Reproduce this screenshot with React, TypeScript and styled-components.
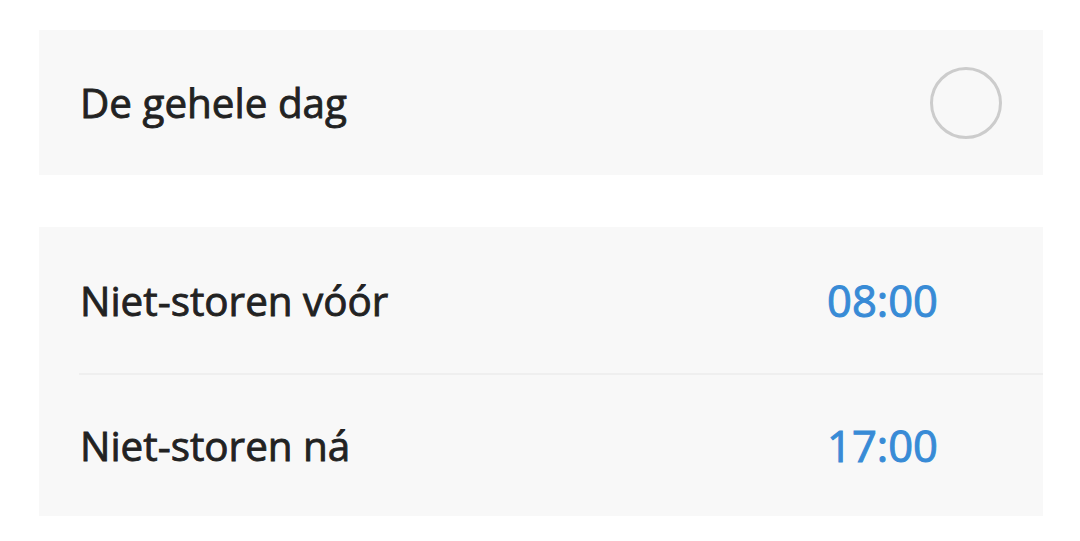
import styled, { createGlobalStyle } from 'styled-components';

const GlobalStyle = createGlobalStyle`
  body {
    margin: 0;
    background: #ffffff;
    font-family: 'Open Sans', 'Noto Sans', sans-serif;
  }
`;

const Page = styled.div`
  display: flex;
  flex-direction: column;
  gap: 52px;
  padding: 30px 37px 0 39px;
`;

const Group = styled.section`
  display: flex;
  flex-direction: column;
  background: #f8f8f8;
`;

const Row = styled.div<{ $height: number }>`
  display: flex;
  align-items: center;
  justify-content: space-between;
  height: ${(p) => p.$height}px;
  padding: 0 41px 0 41px;
`;

/* medium weight: regular cut with a thin stroke */
const Label = styled.span`
  font-size: 40.4px;
  font-weight: 400;
  color: #222222;
  -webkit-text-stroke: 0.85px currentColor;
`;

const Time = styled.span`
  font-size: 43.5px;
  font-weight: 400;
  color: #388bd6;
  margin-right: 64px;
  -webkit-text-stroke: 1px currentColor;
`;

const Radio = styled.span`
  width: 66px;
  height: 66px;
  border-radius: 50%;
  border: 3px solid #cccccc;
  box-sizing: content-box;
`;

const Divider = styled.div`
  height: 2px;
  margin-left: 40px;
  background: #efefef;
`;

export default function App() {
  return (
    <>
      <GlobalStyle />
      <Page>
        <Group>
          <Row $height={145}>
            <Label>De gehele dag</Label>
            <Radio />
          </Row>
        </Group>
        <Group>
          <Row $height={146}>
            <Label>Niet-storen vóór</Label>
            <Time>08:00</Time>
          </Row>
          <Divider />
          <Row $height={141}>
            <Label>Niet-storen ná</Label>
            <Time>17:00</Time>
          </Row>
        </Group>
      </Page>
    </>
  );
}
